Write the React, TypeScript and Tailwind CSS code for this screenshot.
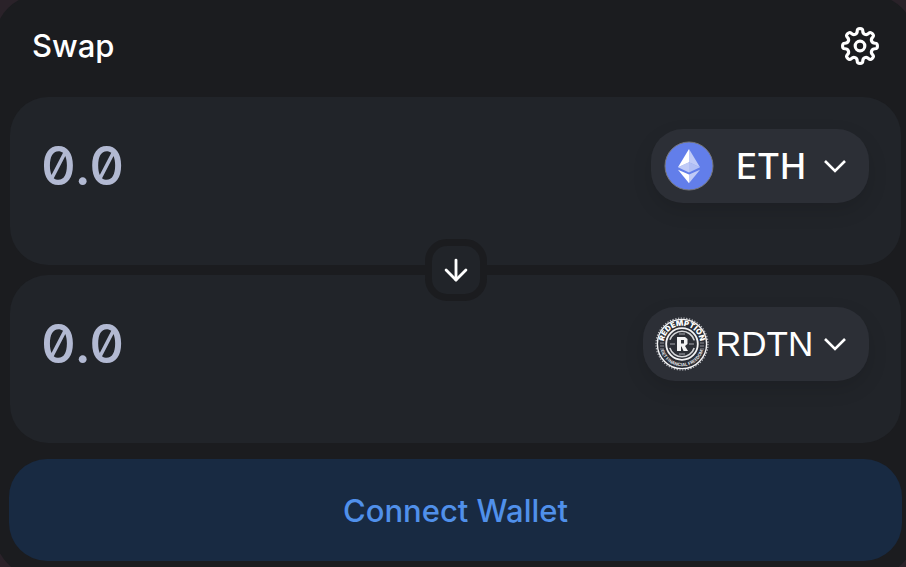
import { FC, ReactNode, useState } from "react";
import { ArrowDown } from "lucide-react";

type TokenPanelProps = {
  id: string;
  label: string;
  value: string;
  setValue: (value: string) => void;
  children: ReactNode;
};

const App: FC = () => {
  const [sell, setSell] = useState<string>("");
  const [buy, setBuy] = useState<string>("");

  return (
    <main className="h-screen overflow-hidden bg-[#2a2229] font-['Inter',sans-serif] text-white">
      <div className="-mt-1.5 -ml-1.5 -mr-2.5 rounded-[48px] bg-[#1b1c1f] pt-1.5 pl-4 pr-[15px] pb-[17px]">
        {/* Title and settings */}
        <header className="flex h-[97px] items-center justify-between pl-[22px] pr-[21px] pb-1.5">
          <h1 className="text-[31px] leading-10 font-medium">Swap</h1>
          <button type="button" aria-label="Settings" className="cursor-pointer">
            <GearIcon />
          </button>
        </header>

        <div className="relative flex flex-col gap-2.5">
          <TokenPanel id="sell" label="From" value={sell} setValue={setSell}>
            <button
              type="button"
              className="flex h-[74px] w-[218px] cursor-pointer items-center rounded-[32px] bg-[#2c2f36] pl-[13px] pr-[22px] shadow-[0_8px_20px_rgba(0,0,0,0.12)]"
            >
              <EthLogo />
              <span className="ml-[22px] text-[35px] leading-10 font-medium">
                ETH
              </span>
              <Chevron />
            </button>
          </TokenPanel>

          <TokenPanel id="buy" label="To" value={buy} setValue={setBuy}>
            <button
              type="button"
              className="flex h-[74px] w-[226px] cursor-pointer items-center rounded-[32px] bg-[#2c2f36] pl-[11px] pr-[22px] shadow-[0_8px_20px_rgba(0,0,0,0.12)]"
            >
              <RdtnLogo />
              <span className="ml-1.5 font-['Liberation_Sans',sans-serif] text-[35px] leading-10">
                RDTN
              </span>
              <Chevron />
            </button>
          </TokenPanel>

          {/* Switch direction */}
          <div className="pointer-events-none absolute inset-0 flex items-center justify-center">
            <button
              type="button"
              aria-label="Switch tokens"
              className="pointer-events-auto grid size-[62px] cursor-pointer place-items-center rounded-[22px] border-7 border-[#1b1c1f] bg-[#212429]"
              onClick={() => {
                setSell(buy);
                setBuy(sell);
              }}
            >
              <ArrowDown size={34} strokeWidth={2} />
            </button>
          </div>
        </div>

        <button
          type="button"
          className="-mx-px mt-4 h-[102px] w-[calc(100%+2px)] cursor-pointer rounded-[38px] bg-[#182a42] pt-0.5 text-[31px] leading-10 font-medium text-[#5090ea]"
        >
          Connect Wallet
        </button>
      </div>
    </main>
  );
};

export default App;

const TokenPanel: FC<TokenPanelProps> = ({
  id,
  label,
  value,
  setValue,
  children,
}) => {
  return (
    <section className="flex min-h-[168px] items-start justify-between rounded-[38px] bg-[#212429] pt-8 pl-[31px] pr-8">
      <label htmlFor={id} className="sr-only">
        {label}
      </label>
      <input
        id={id}
        type="text"
        inputMode="decimal"
        placeholder="0.0"
        className="h-[74px] min-w-0 flex-1 bg-transparent text-[54px] leading-[74px] font-medium slashed-zero outline-none placeholder:text-[#b2b9d2]"
        value={value}
        onChange={(e) => setValue(e.target.value)}
      />
      {children}
    </section>
  );
};

const Chevron: FC = () => (
  <svg
    className="ml-auto h-4 w-6 shrink-0"
    viewBox="0 0 24 16"
    fill="none"
    stroke="currentColor"
    strokeWidth="2.6"
  >
    <path d="M2 3 12 13 22 3" />
  </svg>
);

// One tooth and one valley for every 45 degrees
const point = (radius: number, deg: number, along = 0) => {
  const a = (deg * Math.PI) / 180;
  const x = radius * Math.sin(a) + along * Math.cos(a);
  const y = -radius * Math.cos(a) + along * Math.sin(a);
  return `${x.toFixed(2)} ${y.toFixed(2)}`;
};

const gearPath = [0, 45, 90, 135, 180, 225, 270, 315].reduce(
  (d, deg) =>
    d +
    `C${point(17.4, deg, 5.2)} ${point(12.6, deg + 22.5, -4.6)} ${point(12.6, deg + 22.5)}` +
    `C${point(12.6, deg + 22.5, 4.6)} ${point(17.4, deg + 45, -5.2)} ${point(17.4, deg + 45)}`,
  `M${point(17.4, 0)}`
);

const GearIcon: FC = () => (
  <svg
    className="size-10"
    viewBox="-20 -20 40 40"
    fill="none"
    stroke="currentColor"
    strokeWidth="3.2"
    strokeLinejoin="round"
  >
    <path d={`${gearPath}Z`} />
    <circle r="4.8" />
  </svg>
);

const EthLogo: FC = () => (
  <svg className="size-[50px] shrink-0" viewBox="0 0 50 50">
    <circle cx="25" cy="25" r="24" fill="#627eea" stroke="#77777a" />
    <g fill="#fff">
      <path d="M25 8v13.3l11 5z" fillOpacity=".6" />
      <path d="M25 8 14 26.3l11-5z" />
      <path d="M25 33.5v8.7l11-13.4z" fillOpacity=".6" />
      <path d="M25 42.2v-8.7l-11-4.7z" />
      <path d="m25 31.5 11-5.2-11-5z" fillOpacity=".5" />
      <path d="m14 26.3 11 5.2V21.3z" fillOpacity=".6" />
    </g>
  </svg>
);

const RdtnLogo: FC = () => (
  <svg className="size-14 shrink-0" viewBox="0 0 56 56" fill="none">
    <defs>
      <path id="rdtn-top" d="M9.8 28a18.2 18.2 0 0 1 36.4 0" />
      <path id="rdtn-bottom" d="M5.8 28a22.2 22.2 0 0 0 44.4 0" />
    </defs>
    <circle
      cx="28"
      cy="28"
      r="26"
      stroke="#b9bbc0"
      strokeWidth="1.2"
      strokeDasharray="1.3 1.5"
    />
    <circle cx="28" cy="28" r="24.6" stroke="#f4f4f5" strokeWidth="1.4" />
    <circle cx="28" cy="28" r="15.8" stroke="#f4f4f5" strokeWidth="1.8" />
    <circle
      cx="28"
      cy="28"
      r="12.8"
      stroke="#d6d7da"
      strokeWidth="1.6"
      strokeDasharray="32 8.2"
      strokeDashoffset="-4"
    />
    <path
      d="M16 28h5M35 28h5M25 38h6M25 18h6"
      stroke="#a5a7ad"
      strokeWidth="1"
    />
    <path
      d="M6 24h4m-4 3h4m-4 3h4m-4 3h4M46 24h4m-4 3h4m-4 3h4m-4 3h4"
      stroke="#6c6f77"
      strokeWidth="1.4"
    />
    <text
      fill="#fff"
      fontFamily="Inter, sans-serif"
      fontSize="7.6"
      fontWeight="900"
      textAnchor="middle"
    >
      <textPath href="#rdtn-top" startOffset="50%">
        REDEMPTION
      </textPath>
    </text>
    <text
      fill="#e4e4e7"
      fontFamily="Inter, sans-serif"
      fontSize="4.4"
      fontWeight="700"
      textAnchor="middle"
    >
      <textPath href="#rdtn-bottom" startOffset="50%">
        GET FINANCIAL FREEDOM
      </textPath>
    </text>
    <path
      d="M23 21h8l2.5 2v5L31 30l3 5h-4.5l-2-4.5H27V35h-4zm4 3v3.5h3V24z"
      fill="#f4f4f5"
      fillRule="evenodd"
    />
  </svg>
);
